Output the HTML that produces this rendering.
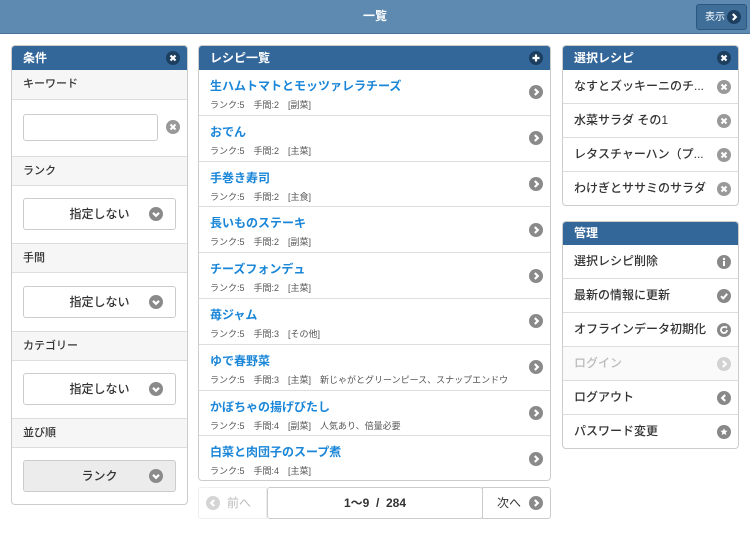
<!DOCTYPE html>
<html><head><meta charset="utf-8"><style>
*{box-sizing:border-box;margin:0;padding:0}
body{width:750px;height:548px;background:#fff;font-family:"Liberation Sans","Noto Sans CJK JP",sans-serif;position:relative;overflow:hidden;color:#333}
.a{position:absolute}
.top{left:0;top:0;width:750px;height:34px;background:#5e89b0;border-bottom:1px solid #4a739a;color:#fff;font-size:12px;font-weight:bold;text-align:center;line-height:33px}
.btn{right:3px;top:4px;width:51px;height:26px;background:#3f6e99;border:1px solid #2c5880;border-radius:3px;color:#fff;font-size:10px;line-height:25px;padding-left:8px;text-align:left;font-weight:normal}
.panel{border:1px solid #ccc;border-radius:4px;overflow:hidden;background:#fff}
.hd{height:24px;background:#336699;color:#fff;font-size:12px;font-weight:bold;line-height:24px;padding-left:11px;position:relative}
.lbl{background:#f6f6f6;border-top:1px solid #ddd;border-bottom:1px solid #ddd;height:30px;line-height:29px;font-size:11px;font-weight:500;padding-left:11px}
.sel{position:absolute;left:11px;width:153px;height:32px;border:1px solid #ccc;border-radius:3px;background:#fff;text-align:center;line-height:30px;font-size:12px;font-weight:500}
.sel svg{position:absolute;right:12px;top:8px}
.it{height:45.8px;border-bottom:1px solid #ddd;position:relative;padding-left:11px}
.it b{display:block;color:#1a86d8;font-size:12px;font-weight:bold;padding-top:7px;height:25px}
.it span{font-size:9px;color:#555}
.it svg,.ri svg{position:absolute;right:7px;top:50%;margin-top:-7px}
.ri{height:34px;border-bottom:1px solid #ddd;position:relative;padding-left:11px;line-height:33px;font-size:12px;font-weight:500;color:#333}
.hd svg{position:absolute;right:7px;top:5px}
</style></head><body>
<svg width="0" height="0" style="position:absolute"><defs>
<g id="r"><circle cx="7" cy="7" r="7" fill="#8a8a8a"/><path d="M5.8 4L8.8 7L5.8 10" stroke="#fff" stroke-width="2.2" fill="none"/></g>
<g id="x"><circle cx="7" cy="7" r="7" fill="#999"/><path d="M4.5 4.5L9.5 9.5M9.5 4.5L4.5 9.5" stroke="#fff" stroke-width="2" fill="none"/></g>
<g id="d"><circle cx="7" cy="7" r="7" fill="#8a8a8a"/><path d="M4 5.8L7 8.8L10 5.8" stroke="#fff" stroke-width="2.2" fill="none"/></g>
<g id="hx"><circle cx="7" cy="7" r="7" fill="#1c3f60"/><path d="M4.5 4.5L9.5 9.5M9.5 4.5L4.5 9.5" stroke="#fff" stroke-width="2.2" fill="none"/></g>
</defs></svg>
<div class="a top">一覧<div class="a btn">表示 <svg style="position:absolute;right:5px;top:5px" width="14" height="14"><circle cx="7" cy="7" r="7" fill="#1c3f60"/><path d="M5.8 4L8.8 7L5.8 10" stroke="#fff" stroke-width="2.2" fill="none"/></svg></div></div>

<div class="a panel" style="left:11px;top:45px;width:177px;height:460px">
<div class="hd">条件<svg width="14" height="14"><use href="#hx"/></svg></div>
<div class="lbl" style="border-top:none">キーワード</div>
<div style="height:56px;position:relative"><div class="a" style="left:11px;top:14px;width:135px;height:27px;border:1px solid #ccc;border-radius:3px"></div><svg class="a" style="left:154px;top:20px" width="14" height="14"><use href="#x"/></svg></div>
<div class="lbl">ランク</div>
<div style="height:57px;position:relative"><div class="sel" style="top:12px">指定しない<svg width="14" height="14"><use href="#d"/></svg></div></div>
<div class="lbl">手間</div>
<div style="height:58px;position:relative"><div class="sel" style="top:13px">指定しない<svg width="14" height="14"><use href="#d"/></svg></div></div>
<div class="lbl">カテゴリー</div>
<div style="height:57px;position:relative"><div class="sel" style="top:12px">指定しない<svg width="14" height="14"><use href="#d"/></svg></div></div>
<div class="lbl">並び順</div>
<div style="height:58px;position:relative"><div class="sel" style="top:12px;background:#ececec">ランク<svg width="14" height="14"><use href="#d"/></svg></div></div>
</div>

<div class="a panel" style="left:198px;top:45px;width:353px;height:436px">
<div class="hd">レシピ一覧<svg width="14" height="14"><circle cx="7" cy="7" r="7" fill="#1c3f60"/><path d="M7 3.5V10.5M3.5 7H10.5" stroke="#fff" stroke-width="2.2"/></svg></div>
<div class="it"><b>生ハムトマトとモッツァレラチーズ</b><span>ランク:5　手間:2　[副菜]</span><svg width="14" height="14"><use href="#r"/></svg></div>
<div class="it"><b>おでん</b><span>ランク:5　手間:2　[主菜]</span><svg width="14" height="14"><use href="#r"/></svg></div>
<div class="it"><b>手巻き寿司</b><span>ランク:5　手間:2　[主食]</span><svg width="14" height="14"><use href="#r"/></svg></div>
<div class="it"><b>長いものステーキ</b><span>ランク:5　手間:2　[副菜]</span><svg width="14" height="14"><use href="#r"/></svg></div>
<div class="it"><b>チーズフォンデュ</b><span>ランク:5　手間:2　[主菜]</span><svg width="14" height="14"><use href="#r"/></svg></div>
<div class="it"><b>苺ジャム</b><span>ランク:5　手間:3　[その他]</span><svg width="14" height="14"><use href="#r"/></svg></div>
<div class="it"><b>ゆで春野菜</b><span>ランク:5　手間:3　[主菜]　新じゃがとグリーンピース、スナップエンドウ</span><svg width="14" height="14"><use href="#r"/></svg></div>
<div class="it"><b>かぼちゃの揚げびたし</b><span>ランク:5　手間:4　[副菜]　人気あり、倍量必要</span><svg width="14" height="14"><use href="#r"/></svg></div>
<div class="it" style="border-bottom:none"><b>白菜と肉団子のスープ煮</b><span>ランク:5　手間:4　[主菜]</span><svg width="14" height="14"><use href="#r"/></svg></div>
</div>

<div class="a" style="left:198px;top:487px;width:69px;height:32px;border:1px solid #eee;border-radius:3px 0 0 3px;color:#bbb;font-size:12px;line-height:30px;padding-left:28px">前へ<svg class="a" style="left:7px;top:8px;opacity:.35" width="14" height="14"><circle cx="7" cy="7" r="7" fill="#888"/><path d="M8.2 4L5.2 7L8.2 10" stroke="#fff" stroke-width="2.2" fill="none"/></svg></div>
<div class="a" style="left:267px;top:487px;width:216px;height:32px;border:1px solid #ccc;border-radius:3px;text-align:center;font-size:12px;font-weight:bold;line-height:30px;white-space:pre">1〜9  /  284</div>
<div class="a" style="left:482px;top:487px;width:69px;height:32px;border:1px solid #ccc;border-radius:0 3px 3px 0;font-size:12px;line-height:30px;padding-left:14px">次へ<svg class="a" style="right:7px;top:8px" width="14" height="14"><use href="#r"/></svg></div>

<div class="a panel" style="left:562px;top:45px;width:177px;height:161px">
<div class="hd">選択レシピ<svg width="14" height="14"><use href="#hx"/></svg></div>
<div class="ri">なすとズッキーニのチ...<svg width="14" height="14"><use href="#x"/></svg></div>
<div class="ri">水菜サラダ その1<svg width="14" height="14"><use href="#x"/></svg></div>
<div class="ri">レタスチャーハン（プ...<svg width="14" height="14"><use href="#x"/></svg></div>
<div class="ri" style="border-bottom:none">わけぎとササミのサラダ<svg width="14" height="14"><use href="#x"/></svg></div>
</div>

<div class="a panel" style="left:562px;top:221px;width:177px;height:228px">
<div class="hd" style="height:23px;line-height:23px">管理</div>
<div class="ri">選択レシピ削除<svg width="14" height="14"><circle cx="7" cy="7" r="7" fill="#888"/><rect x="6" y="6" width="2" height="5" fill="#fff"/><circle cx="7" cy="4" r="1.2" fill="#fff"/></svg></div>
<div class="ri">最新の情報に更新<svg width="14" height="14"><circle cx="7" cy="7" r="7" fill="#888"/><path d="M4 7.2L6.2 9.4L10.2 4.8" stroke="#fff" stroke-width="2" fill="none"/></svg></div>
<div class="ri">オフラインデータ初期化<svg width="14" height="14"><circle cx="7" cy="7" r="7" fill="#888"/><path d="M10 7A3 3 0 1 1 8.5 4.4" stroke="#fff" stroke-width="1.8" fill="none"/><path d="M7.5 3L10.5 3.5L9.5 6Z" fill="#fff"/></svg></div>
<div class="ri" style="color:#bbb;background:#fafafa">ログイン<svg width="14" height="14" style="opacity:.35"><use href="#r"/></svg></div>
<div class="ri">ログアウト<svg width="14" height="14"><circle cx="7" cy="7" r="7" fill="#888"/><path d="M8.2 4L5.2 7L8.2 10" stroke="#fff" stroke-width="2.2" fill="none"/></svg></div>
<div class="ri" style="border-bottom:none">パスワード変更<svg width="14" height="14"><circle cx="7" cy="7" r="7" fill="#888"/><path d="M7 3.2L8.1 5.6L10.6 5.8L8.7 7.5L9.3 10L7 8.7L4.7 10L5.3 7.5L3.4 5.8L5.9 5.6Z" fill="#fff"/></svg></div>
</div>
</body></html>
